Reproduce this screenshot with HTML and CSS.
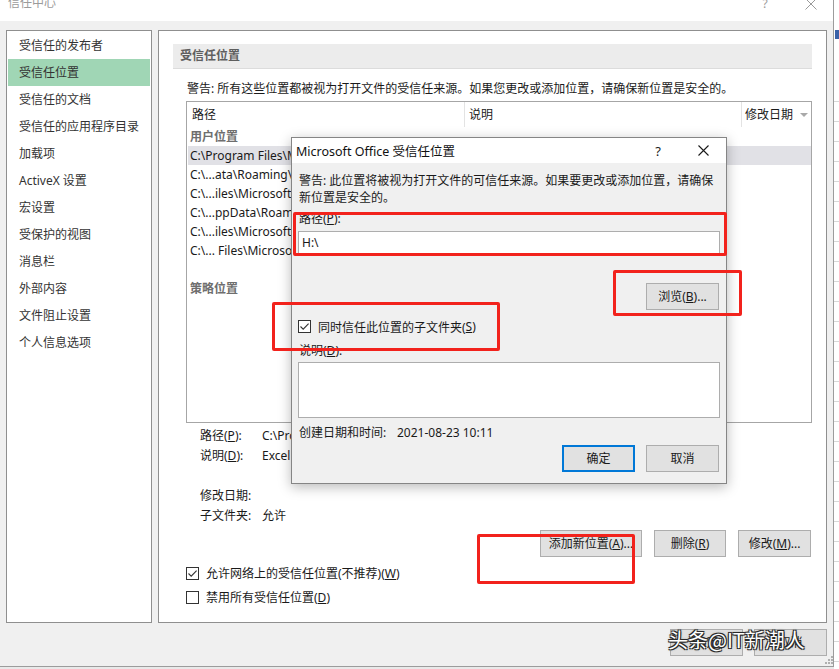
FILE: index.html
```html
<!DOCTYPE html>
<html lang="zh-CN">
<head>
<meta charset="utf-8">
<title>信任中心</title>
<link rel="stylesheet" href="styles.css">
</head>
<body>
<div class="app">
  <div class="window">
    <div class="titlebar">
      <span class="wtitle">信任中心</span>
      <span class="tb-help">?</span>
      <span class="tb-close"><svg width="12" height="12" viewBox="0 0 12 12"><path d="M0.5 0.5L11.5 11.5M11.5 0.5L0.5 11.5" stroke="#9a9a9a" stroke-width="1" fill="none"/></svg></span>
    </div>
    <div class="wbody">
      <div class="panels">
        <nav class="nav">
          <div class="nav-item">受信任的发布者</div>
          <div class="nav-item active">受信任位置</div>
          <div class="nav-item">受信任的文档</div>
          <div class="nav-item">受信任的应用程序目录</div>
          <div class="nav-item">加载项</div>
          <div class="nav-item">ActiveX 设置</div>
          <div class="nav-item">宏设置</div>
          <div class="nav-item">受保护的视图</div>
          <div class="nav-item">消息栏</div>
          <div class="nav-item">外部内容</div>
          <div class="nav-item">文件阻止设置</div>
          <div class="nav-item">个人信息选项</div>
        </nav>
        <section class="main">
          <div class="sec-head">受信任位置</div>
          <p class="warn">警告: 所有这些位置都被视为打开文件的受信任来源。如果您更改或添加位置，请确保新位置是安全的。</p>
          <div class="list">
            <div class="list-head">
              <div class="hc hc1">路径</div>
              <div class="hc hc2">说明</div>
              <div class="hc hc3">修改日期<span class="sort"></span></div>
            </div>
            <div class="group">用户位置</div>
            <div class="row sel"><span class="rc1">C:\Program Files\Microsoft Office\Root\Templates\</span><span class="rc2">Excel 默认位置: 应用程序模板</span></div>
            <div class="row"><span class="rc1">C:\...ata\Roaming\Microsoft\Templates\</span><span class="rc2">Excel 默认位置: 用户模板</span></div>
            <div class="row"><span class="rc1">C:\...iles\Microsoft Office\Root\Office16\XLSTART\</span><span class="rc2">Excel 默认位置: Excel 启动</span></div>
            <div class="row"><span class="rc1">C:\...ppData\Roaming\Microsoft\Excel\XLSTART\</span><span class="rc2">Excel 默认位置: 用户启动</span></div>
            <div class="row"><span class="rc1">C:\...iles\Microsoft Office\Root\Office16\STARTUP\</span><span class="rc2">Excel 默认位置: Office 启动</span></div>
            <div class="row"><span class="rc1">C:\... Files\Microsoft Office\Root\Office16\Library\</span><span class="rc2">Excel 默认位置: 加载项</span></div>
            <div class="row"></div>
            <div class="group">策略位置</div>
          </div>
          <div class="details">
            <div class="drow"><span class="dl">路径(<u>P</u>):</span><span class="dv">C:\Program Files\Microsoft Office\Root\Templates\</span></div>
            <div class="drow"><span class="dl">说明(<u>D</u>):</span><span class="dv">Excel 默认位置: 应用程序模板</span></div>
            <div class="drow"></div>
            <div class="drow"><span class="dl">修改日期:</span><span class="dv"></span></div>
            <div class="drow"><span class="dl">子文件夹:</span><span class="dv">允许</span></div>
          </div>
          <div class="actions">
            <button class="btn w-add">添加新位置(<u>A</u>)...</button>
            <button class="btn w-del">删除(<u>R</u>)</button>
            <button class="btn w-mod">修改(<u>M</u>)...</button>
          </div>
          <div class="opts">
            <div class="opt"><span class="chk"><svg width="11" height="11" viewBox="0 0 11 11"><path d="M1.5 5.5L4.2 8.2L9.6 2.6" stroke="#333" stroke-width="1.1" fill="none"/></svg></span>允许网络上的受信任位置(不推荐)(<u>W</u>)</div>
            <div class="opt"><span class="chk"></span>禁用所有受信任位置(<u>D</u>)</div>
          </div>
        </section>
      </div>
      <div class="footer">
        <button class="btn w-ok">确定</button>
        <button class="btn w-ok">取消</button>
      </div>
    </div>
  </div>
  <div class="excel"><span class="xl-sel"></span></div>

  <div class="dialog">
    <div class="dlg-title">
      <span class="dlg-name">Microsoft Office 受信任位置</span>
      <span class="dlg-help">?</span>
      <span class="dlg-close"><svg width="11" height="11" viewBox="0 0 11 11"><path d="M0.5 0.5L10.5 10.5M10.5 0.5L0.5 10.5" stroke="#1a1a1a" stroke-width="1.1" fill="none"/></svg></span>
    </div>
    <div class="dlg-body">
      <p class="dlg-warn">警告: 此位置将被视为打开文件的可信任来源。如果要更改或添加位置，请确保<br>新位置是安全的。</p>
      <div class="lbl">路径(<u>P</u>):</div>
      <div class="field">H:\</div>
      <div class="browse-row"><button class="btn w-ok">浏览(<u>B</u>)...</button></div>
      <div class="chk-row"><span class="chk"><svg width="11" height="11" viewBox="0 0 11 11"><path d="M1.5 5.5L4.2 8.2L9.6 2.6" stroke="#333" stroke-width="1.1" fill="none"/></svg></span>同时信任此位置的子文件夹(<u>S</u>)</div>
      <div class="lbl lbl2">说明(<u>D</u>):</div>
      <div class="area"></div>
      <div class="created"><span class="cl">创建日期和时间:</span><span>2021-08-23 10:11</span></div>
      <div class="dlg-btns">
        <button class="btn w-ok default">确定</button>
        <button class="btn w-ok">取消</button>
      </div>
    </div>
  </div>

  <div class="mark m1"></div>
  <div class="mark m2"></div>
  <div class="mark m3"></div>
  <div class="mark m4"></div>

  <div class="grip"><svg width="8" height="8" viewBox="0 0 8 8" fill="#b0b0b0"><rect x="6" y="0" width="2" height="2"/><rect x="3" y="3" width="2" height="2"/><rect x="6" y="3" width="2" height="2"/><rect x="0" y="6" width="2" height="2"/><rect x="3" y="6" width="2" height="2"/><rect x="6" y="6" width="2" height="2"/></svg></div>
  <div class="watermark">头条@IT新潮人</div>
</div>
</body>
</html>
```

FILE: styles.css
```css
* { box-sizing: border-box; }
html, body { margin: 0; padding: 0; }
body {
  width: 839px;
  height: 669px;
  overflow: hidden;
  font-family: "Noto Sans", "Noto Sans CJK SC", sans-serif;
  font-size: 12px;
  color: #1a1a1a;
  background: #e9e9e9;
}
p { margin: 0; }
u { text-decoration: underline; text-underline-offset: 1px; }

.app {
  position: relative;
  width: 839px;
  height: 669px;
  display: flex;
}

/* main window */
.window {
  width: 834px;
  height: 667px;
  flex: none;
  background: #f0f0f0;
  border-right: 1px solid #9c9c9c;
  border-bottom: 1px solid #9c9c9c;
  display: flex;
  flex-direction: column;
}
.titlebar {
  height: 21px;
  flex: none;
  background: #fff;
  display: flex;
  align-items: flex-start;
  overflow: hidden;
}
.wtitle {
  margin: -6px 0 0 8px;
  line-height: 17px;
  color: #9b9b9b;
}
.tb-help {
  margin: -5px 0 0 auto;
  width: 20px;
  text-align: center;
  line-height: 17px;
  color: #9b9b9b;
}
.tb-close {
  width: 24px;
  margin: -2px 10px 0 24px;
  display: flex;
  justify-content: center;
}

.wbody {
  flex: 1;
  padding: 9px 6px 0 6px;
  display: flex;
  flex-direction: column;
}
.panels {
  display: flex;
  gap: 6px;
  height: 593px;
  flex: none;
}

.nav {
  width: 146px;
  flex: none;
  background: #fff;
  border: 1px solid #8f8f8f;
  padding-top: 1px;
}
.nav-item {
  height: 27px;
  line-height: 27px;
  margin: 0 1px;
  padding-left: 11px;
  color: #333;
  white-space: nowrap;
}
.nav-item.active { background: #a0d6b5; }

.main {
  flex: 1;
  background: #fff;
  border: 1px solid #8f8f8f;
  display: flex;
  flex-direction: column;
}
.sec-head {
  margin: 13px 14px 0;
  height: 25px;
  background: #ececec;
  border-bottom: 1px solid #dcdcdc;
  padding-left: 7px;
  line-height: 24px;
  font-weight: 700;
  color: #5e5e5e;
}
.warn {
  margin: 11px 0 0 28px;
  line-height: 17px;
  white-space: nowrap;
}

.list {
  margin: 4px 0 0 27px;
  width: 626px;
  height: 322px;
  border: 1px solid #a6a6a6;
  overflow: hidden;
  flex: none;
}
.list-head {
  display: flex;
  height: 25px;
}
.hc {
  line-height: 25px;
  padding-left: 4px;
  white-space: nowrap;
}
.hc1 { width: 278px; padding-left: 5px; border-right: 1px solid #e3e3e3; }
.hc2 { width: 277px; border-right: 1px solid #e3e3e3; }
.hc3 { flex: 1; padding-left: 3px; display: flex; align-items: center; }
.sort {
  margin-left: 7px;
  width: 0;
  height: 0;
  border-left: 4px solid transparent;
  border-right: 4px solid transparent;
  border-top: 4px solid #a9a9a9;
}
.group {
  height: 19px;
  line-height: 19px;
  padding-left: 3px;
  font-weight: 700;
  color: #6e6e6e;
}
.row {
  height: 19px;
  line-height: 19px;
  margin-left: 1px;
  width: 623px;
  display: flex;
  white-space: nowrap;
  padding-left: 2px;
}
.row.sel { background: #e1e1e6; }
.rc1 { width: 275px; overflow: hidden; }
.rc2 { padding-left: 4px; }

.details { margin: 3px 0 0 41px; }
.drow {
  height: 20px;
  line-height: 20px;
  display: flex;
  white-space: nowrap;
}
.dl { width: 62px; }

.actions {
  margin: 4px 15px 0 0;
  display: flex;
  justify-content: flex-end;
  gap: 12px;
}
.btn {
  height: 27px;
  background: #e1e1e1;
  border: 1px solid #adadad;
  font-family: "Noto Sans", "Noto Sans CJK SC", sans-serif;
  font-size: 12px;
  color: #1a1a1a;
  padding: 0;
  line-height: 25px;
  white-space: nowrap;
}
.w-add { width: 102px; }
.w-del { width: 72px; }
.w-mod { width: 73px; }
.w-ok { width: 73px; }

.opts { margin: 4px 0 0 27px; }
.opt {
  height: 24px;
  display: flex;
  align-items: center;
  white-space: nowrap;
}
.chk {
  width: 13px;
  height: 13px;
  border: 1px solid #333;
  background: #fff;
  margin-right: 7px;
  flex: none;
  display: flex;
  align-items: center;
  justify-content: center;
}

.footer {
  margin-top: 6px;
  display: flex;
  justify-content: flex-end;
  gap: 11px;
}

/* strip of the window behind */
.excel {
  flex: 1;
  height: 669px;
  position: relative;
  background-color: #fff;
  background-image: repeating-linear-gradient(to bottom, transparent 0, transparent 19px, #d8d8d8 19px, #d8d8d8 20px);
  background-position: 0 82px;
  background-repeat: no-repeat;
  background-size: 100% 600px;
}
.xl-sel {
  position: absolute;
  left: 1px;
  top: 30px;
  width: 4px;
  height: 9px;
  background: #3a62a8;
}

/* dialog */
.dialog {
  position: absolute;
  left: 291px;
  top: 137px;
  width: 436px;
  height: 347px;
  border: 1px solid #858585;
  background: #f0f0f0;
  box-shadow: 0 3px 12px rgba(0, 0, 0, 0.28);
  display: flex;
  flex-direction: column;
}
.dlg-title {
  height: 25px;
  flex: none;
  background: #fff;
  display: flex;
  align-items: center;
  padding-left: 4px;
}
.dlg-name {
  font-size: 12.5px;
  white-space: nowrap;
  color: #111;
}
.dlg-help {
  margin-left: auto;
  width: 20px;
  text-align: center;
  font-size: 13px;
}
.dlg-close {
  width: 22px;
  margin: 0 12px 0 24px;
  display: flex;
  justify-content: center;
}
.dlg-body {
  flex: 1;
  padding: 0 6px;
  display: flex;
  flex-direction: column;
}
.dlg-warn {
  margin-top: 9px;
  padding-left: 1px;
  line-height: 17px;
  white-space: nowrap;
}
.lbl {
  margin-top: 4px;
  padding-left: 1px;
  line-height: 17px;
}
.lbl2 { margin-top: 7px; }
.field {
  margin-top: 4px;
  height: 23px;
  width: 422px;
  background: #fff;
  border: 1px solid #adadad;
  line-height: 21px;
  padding-left: 3px;
}
.browse-row {
  margin-top: 29px;
  display: flex;
  justify-content: flex-end;
  padding-right: 1px;
}
.chk-row {
  margin-top: 8px;
  height: 17px;
  display: flex;
  align-items: center;
  white-space: nowrap;
}
.area {
  margin-top: 3px;
  height: 56px;
  width: 422px;
  background: #fff;
  border: 1px solid #adadad;
}
.created {
  margin-top: 6px;
  padding-left: 1px;
  line-height: 17px;
  display: flex;
  white-space: nowrap;
}
.cl { width: 98px; }
.dlg-btns {
  margin-top: 4px;
  display: flex;
  justify-content: flex-end;
  gap: 11px;
  padding-right: 1px;
}
.btn.default { border: 2px solid #0078d7; line-height: 23px; }

/* red annotation boxes */
.mark {
  position: absolute;
  border: 3px solid #f2221c;
  border-radius: 2px;
}
.m1 { left: 293px; top: 212px; width: 434px; height: 44px; }
.m2 { left: 613px; top: 270px; width: 129px; height: 46px; }
.m3 { left: 272px; top: 302px; width: 228px; height: 49px; }
.m4 { left: 477px; top: 534px; width: 158px; height: 50px; }

.grip {
  position: absolute;
  left: 825px;
  top: 656px;
  width: 8px;
  height: 8px;
  display: flex;
}

.watermark {
  position: absolute;
  left: 668px;
  top: 626px;
  font-family: "Noto Sans CJK SC", sans-serif;
  font-size: 20px;
  line-height: 28px;
  color: #fff;
  white-space: nowrap;
  text-shadow: 1px 1px 0 #2a2a2a, -1px -1px 0 #2a2a2a, 1px -1px 0 #2a2a2a, -1px 1px 0 #2a2a2a, 0 0 3px rgba(0,0,0,0.6);
}
```
